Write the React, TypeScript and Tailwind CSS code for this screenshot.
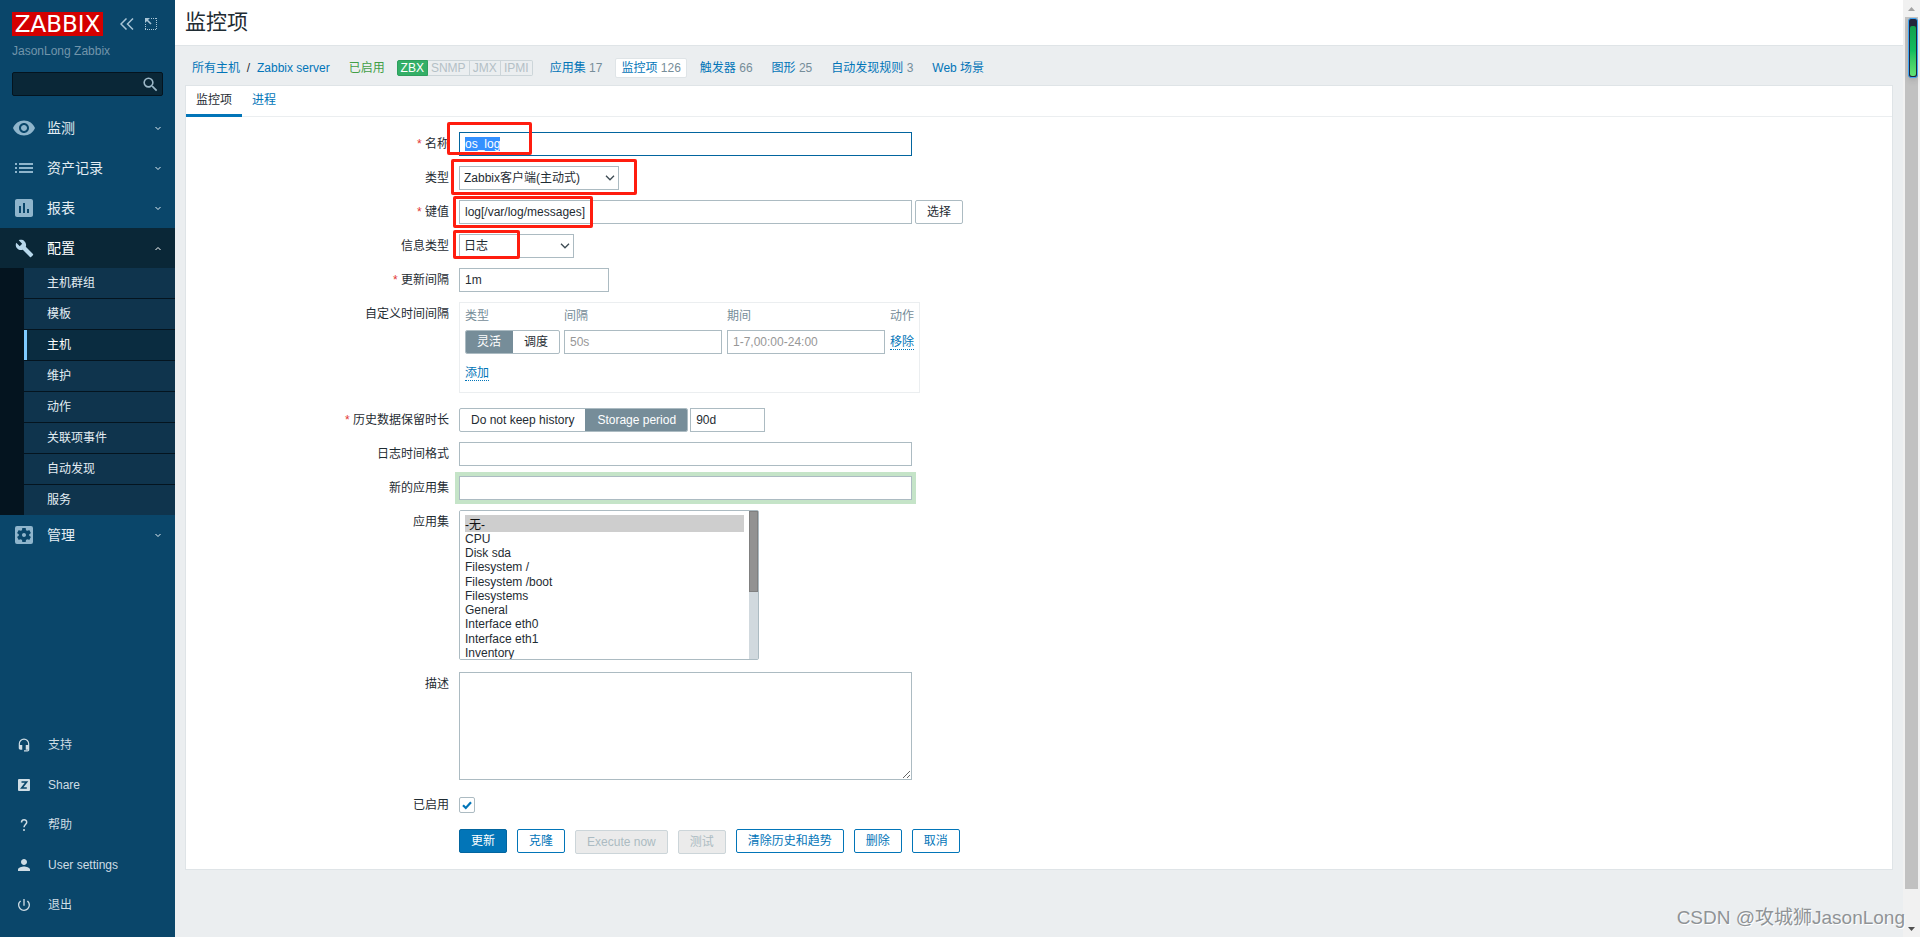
import { useEffect, useRef, type ReactNode } from 'react';
import {
  MdBuild,
  MdHeadsetMic,
  MdInsertChart,
  MdPerson,
  MdPowerSettingsNew,
  MdSearch,
  MdSettingsApplications,
  MdVisibility,
} from 'react-icons/md';

const inputClass = 'h-6 border border-[#acbbc2] bg-white px-[5px] text-[#1f2c33] outline-none placeholder:text-[#979797]';
const linkClass = 'text-[#0275b8]';

const configItems = ['主机群组', '模板', '主机', '维护', '动作', '关联项事件', '自动发现', '服务'];

const hostTabs = [
  { label: '应用集', count: 17 },
  { label: '监控项', count: 126, active: true },
  { label: '触发器', count: 66 },
  { label: '图形', count: 25 },
  { label: '自动发现规则', count: 3 },
  { label: 'Web 场景' },
];

const applications = [
  '-无-',
  'CPU',
  'Disk sda',
  'Filesystem /',
  'Filesystem /boot',
  'Filesystems',
  'General',
  'Interface eth0',
  'Interface eth1',
  'Inventory',
  'Memory',
  'Monitoring agent',
  'Network interfaces',
  'OS',
  'Processes',
  'Security',
  'Status',
  'Storage',
];

function ListIcon() {
  return (
    <svg width="18" height="12" viewBox="0 0 18 12" fill="currentColor">
      <path d="M0 1h2v2H0zM4 1h14v2H4zM0 5h2v2H0zM4 5h14v2H4zM0 9h2v2H0zM4 9h14v2H4z" />
    </svg>
  );
}

function Chevron({ up }: { up?: boolean }) {
  return (
    <svg width="6" height="5" viewBox="0 0 6 5" fill="none" stroke="currentColor" strokeWidth="1">
      <path d={up ? 'M.5 4 3 1.5 5.5 4' : 'M.5 1 3 3.500 5.5 1'} />
    </svg>
  );
}

function MenuItem({ icon, label, open }: { icon: ReactNode; label: string; open?: boolean }) {
  return (
    <a
      href="#"
      className={
        open
          ? 'flex h-10 items-center bg-[#0a2737] pr-[14px] pl-3 text-sm text-white'
          : 'flex h-10 items-center pr-[14px] pl-3 text-sm text-[#e3edf3]'
      }
    >
      <span className={open ? 'flex w-6 justify-center text-[#b8d8ec]' : 'flex w-6 justify-center text-[#8fb5cc]'}>
        {icon}
      </span>
      <span className="ml-[11px] flex-1">{label}</span>
      <Chevron up={open} />
    </a>
  );
}

function BottomItem({ icon, label }: { icon: ReactNode; label: string }) {
  return (
    <a href="#" className="flex h-10 items-center gap-3 pl-3 text-[#cfdde5]">
      <span className="flex w-6 justify-center">{icon}</span>
      {label}
    </a>
  );
}

function Sidebar() {
  return (
    <aside className="sticky top-0 flex h-screen w-[175px] shrink-0 flex-col bg-[#0a466a]">
      <div className="flex items-center px-3 pt-3">
        <a
          href="#"
          className="flex h-6 w-[91px] items-center justify-center bg-[#d40000] font-['DejaVu_Sans',sans-serif] text-[23px] leading-6 text-white"
        >
          ZABBIX
        </a>
        <button type="button" aria-label="收起" className="ml-[17px] text-[#a9c5d6]">
          <svg width="14" height="12" viewBox="0 0 14 12" fill="none" stroke="currentColor" strokeWidth="1.5">
            <path d="M6.5.5 1 6l5.500 5.500M13 .5 7.500 6l5.500 5.500" />
          </svg>
        </button>
        <button type="button" aria-label="隐藏" className="ml-[11px] text-[#a9c5d6]">
          <svg width="12" height="12" viewBox="0 0 12 12" fill="none" stroke="currentColor">
            <path d="M6 .5h6M11.500 0v12M0 11.500h12M.5 6v6" strokeDasharray="1 1" />
            <path d="M1 1l5 5" strokeWidth="1.600" />
            <path d="M0 0h5L0 5z" fill="currentColor" stroke="none" />
          </svg>
        </button>
      </div>
      <div className="px-3 pt-[7px] leading-4 text-[#7295ab]">JasonLong Zabbix</div>
      <div className="mx-3 mt-[13px] flex h-6 items-center rounded-xs border border-[#04141f] bg-[#0a2737] pr-[2px]">
        <input type="text" aria-label="搜索" className="w-full min-w-0 bg-transparent px-1 text-white outline-none" />
        <button type="button" aria-label="搜索" className="shrink-0 text-[#9cb8c8]">
          <MdSearch size={19} />
        </button>
      </div>

      <nav className="mt-3">
        <MenuItem icon={<MdVisibility size={24} />} label="监测" />
        <MenuItem icon={<ListIcon />} label="资产记录" />
        <MenuItem icon={<MdInsertChart size={24} />} label="报表" />
        <MenuItem icon={<MdBuild size={19} />} label="配置" open />
        <ul className="flex flex-col gap-px bg-[#04141f] pl-6">
          {configItems.map((item) => (
            <li key={item}>
              <a
                href="#"
                className={
                  item === '主机'
                    ? 'flex h-[30px] items-center border-l-[3px] border-[#7fcbff] bg-[#0a2c40] pl-5 text-white'
                    : 'flex h-[30px] items-center bg-[#0f344d] pl-[23px] text-[#e3edf3]'
                }
              >
                {item}
              </a>
            </li>
          ))}
        </ul>
        <MenuItem icon={<MdSettingsApplications size={24} />} label="管理" />
      </nav>

      <nav className="mt-auto pb-3">
        <BottomItem icon={<MdHeadsetMic size={14} />} label="支持" />
        <BottomItem
          icon={
            <svg width="12" height="12" viewBox="0 0 12 12">
              <rect width="12" height="12" rx="1" fill="currentColor" />
              <path d="M3.500 3h5L3.800 9h5" fill="none" stroke="#0a466a" strokeWidth="1.700" />
            </svg>
          }
          label="Share"
        />
        <BottomItem
          icon={
            <svg width="12" height="12" viewBox="0 0 12 12" fill="none" stroke="currentColor" strokeWidth="1.500">
              <path d="M3.500 3.500C3.500-.2 8.700 0 8.700 3.200 8.700 5.500 6 5.600 6 8.300M6 10v2" />
            </svg>
          }
          label="帮助"
        />
        <BottomItem icon={<MdPerson size={18} />} label="User settings" />
        <BottomItem icon={<MdPowerSettingsNew size={16} />} label="退出" />
      </nav>
    </aside>
  );
}

function HostNav() {
  return (
    <nav className="flex h-[39px] items-center pt-1 pl-[17px]">
      <a href="#" className={linkClass}>所有主机</a>
      <span className="w-[17px] text-center">/</span>
      <a href="#" className={linkClass}>Zabbix server</a>
      <span className="ml-[19px] text-[#429e47]">已启用</span>
      <div className="ml-3 flex h-4 items-center text-center leading-[14px]">
        <span className="w-[31px] rounded-l-xs border border-[#2f9f5e] bg-[#34af67] text-white">ZBX</span>
        <span className="w-[42px] border border-l-0 border-[#ccd5d9] text-[#b4c0c6]">SNMP</span>
        <span className="w-[31px] border border-l-0 border-[#ccd5d9] text-[#b4c0c6]">JMX</span>
        <span className="w-8 rounded-r-xs border border-l-0 border-[#ccd5d9] text-[#b4c0c6]">IPMI</span>
      </div>
      <div className="ml-[11px] flex gap-[7px]">
        {hostTabs.map((tab) => (
          <a
            key={tab.label}
            href="#"
            className={
              tab.active
                ? 'rounded-xs border border-[#dfe4e7] bg-white px-[5px] leading-[18px] text-[#0275b8]'
                : 'border border-transparent px-[5px] leading-[18px] text-[#0275b8]'
            }
          >
            {tab.label}
            {tab.count && <span className="text-[#768d99]"> {tab.count}</span>}
          </a>
        ))}
      </div>
    </nav>
  );
}

type RowProps = {
  label?: string;
  htmlFor?: string;
  required?: boolean;
  children: ReactNode;
};

function Row({ label, htmlFor, required, children }: RowProps) {
  return (
    <div className="flex gap-[10px]">
      <label htmlFor={htmlFor} className="w-[263px] shrink-0 text-right leading-6">
        {required && <span className="text-[#e33734]">* </span>}
        {label}
      </label>
      <div className="relative flex">{children}</div>
    </div>
  );
}

// red frame drawn over a field
function Mark({ className }: { className: string }) {
  return <span className={`pointer-events-none absolute rounded-xs border-3 border-[#ff1d0f] ${className}`} />;
}

function Select({ id, option, className }: { id: string; option: string; className: string }) {
  return (
    <div className="relative">
      <select
        id={id}
        className={`block h-6 appearance-none border border-[#acbbc2] bg-white pr-5 pl-1 text-[#1f2c33] outline-none ${className}`}
      >
        <option>{option}</option>
      </select>
      <svg
        width="10"
        height="6"
        viewBox="0 0 10 6"
        fill="none"
        stroke="#3c4a52"
        strokeWidth="1.300"
        className="pointer-events-none absolute top-[9px] right-1"
      >
        <path d="M1 .8 5 4.800 9 .8" />
      </svg>
    </div>
  );
}

function Segmented({ name, options, selected }: { name: string; options: string[]; selected: number }) {
  return (
    <div className="flex h-6 overflow-hidden rounded-xs border border-[#acbbc2]">
      {options.map((option, i) => (
        <label
          key={option}
          className="flex items-center border-[#768d99] px-[11px] leading-[22px] not-first:border-l has-checked:bg-[#768d99] has-checked:text-white"
        >
          <input type="radio" name={name} defaultChecked={i === selected} className="sr-only" />
          {option}
        </label>
      ))}
    </div>
  );
}

function IntervalTable() {
  return (
    <div className="h-[91px] border border-[#ebeef0] px-[5px] pt-[2px]">
      <table className="border-collapse text-left">
        <thead>
          <tr className="h-[22px] text-[#768d99]">
            <th className="w-[99px] font-normal">类型</th>
            <th className="w-[163px] font-normal">间隔</th>
            <th className="w-[163px] font-normal">期间</th>
            <th className="font-normal">动作</th>
          </tr>
        </thead>
        <tbody>
          <tr className="h-[30px]">
            <td className="pr-1">
              <Segmented name="interval-type" options={['灵活', '调度']} selected={0} />
            </td>
            <td className="pr-[5px]">
              <input type="text" aria-label="间隔" placeholder="50s" className={`${inputClass} w-full`} />
            </td>
            <td className="pr-[5px]">
              <input type="text" aria-label="期间" placeholder="1-7,00:00-24:00" className={`${inputClass} w-full`} />
            </td>
            <td>
              <button type="button" className="border-b border-dotted border-[#0275b8] leading-[14px] text-[#0275b8]">
                移除
              </button>
            </td>
          </tr>
          <tr className="h-8">
            <td colSpan={4}>
              <button type="button" className="border-b border-dotted border-[#0275b8] leading-[14px] text-[#0275b8]">
                添加
              </button>
            </td>
          </tr>
        </tbody>
      </table>
    </div>
  );
}

function ItemForm() {
  const nameRef = useRef<HTMLInputElement>(null);

  useEffect(() => {
    nameRef.current?.focus();
    nameRef.current?.select();
  }, []);

  const action = 'h-6 rounded-xs border border-[#0275b8] bg-white px-[11px] text-[#0275b8]';
  const disabled = 'mt-px h-6 rounded-xs border border-[#ccd5d9] bg-[#ebebeb] px-[11px] text-[#acbbc2]';

  return (
    <form className="flex flex-col gap-[10px] pt-[15px] pb-[15px]">
      <Row label="名称" htmlFor="name" required>
        <input
          ref={nameRef}
          id="name"
          type="text"
          defaultValue="os_log"
          className={`${inputClass} w-[453px] selection:bg-[#3390ff] selection:text-white focus:border-[#02659f]`}
        />
        <Mark className="-top-[10px] -left-3 h-[33px] w-[85px]" />
      </Row>
      <Row label="类型" htmlFor="type">
        <Select id="type" option="Zabbix客户端(主动式)" className="w-[160px]" />
        <Mark className="-top-[7px] -left-2 h-9 w-[186px]" />
      </Row>
      <Row label="键值" htmlFor="key" required>
        <input id="key" type="text" defaultValue="log[/var/log/messages]" className={`${inputClass} w-[453px]`} />
        <button type="button" className="ml-[3px] h-6 rounded-xs border border-[#acbbc2] px-[11px]">
          选择
        </button>
        <Mark className="-top-1 -left-[6px] h-8 w-[140px]" />
      </Row>
      <Row label="信息类型" htmlFor="value-type">
        <Select id="value-type" option="日志" className="w-[115px]" />
        <Mark className="-top-1 -left-[6px] h-[29px] w-[67px]" />
      </Row>
      <Row label="更新间隔" htmlFor="delay" required>
        <input id="delay" type="text" defaultValue="1m" className={`${inputClass} w-[150px]`} />
      </Row>
      <Row label="自定义时间间隔">
        <IntervalTable />
      </Row>
      <div className="pt-[5px]">
        <Row label="历史数据保留时长" htmlFor="history" required>
          <Segmented name="history-mode" options={['Do not keep history', 'Storage period']} selected={1} />
          <input id="history" type="text" defaultValue="90d" className={`${inputClass} ml-[2px] w-[75px]`} />
        </Row>
      </div>
      <Row label="日志时间格式" htmlFor="logtime">
        <input id="logtime" type="text" className={`${inputClass} w-[453px]`} />
      </Row>
      <Row label="新的应用集" htmlFor="new-app">
        <input id="new-app" type="text" className={`${inputClass} w-[453px] ring-4 ring-[#c5e4c8]`} />
      </Row>
      <Row label="应用集" htmlFor="apps">
        <select
          id="apps"
          multiple
          size={10}
          defaultValue={['-无-']}
          className="h-[150px] w-[300px] rounded-xs border border-[#acbbc2] bg-white py-1 pr-[14px] pl-[5px] text-[#1f2c33] [scrollbar-width:none]"
        >
          {applications.map((app) => (
            <option key={app} className="min-h-0 p-0 leading-[14px] nth-[4n]:pb-px">
              {app}
            </option>
          ))}
        </select>
        <div className="pointer-events-none absolute inset-y-px right-px w-[9px] bg-[#d1d9de]">
          <div className="h-[81px] border border-[#808080] bg-[#929292]" />
        </div>
      </Row>
      <div className="pt-[2px]">
        <Row label="描述" htmlFor="description">
          <textarea
            id="description"
            className="block h-[108px] w-[453px] resize border border-[#acbbc2] bg-white p-1 outline-none"
          />
        </Row>
      </div>
      <div className="h-[29px] pt-[3px]">
        <Row label="已启用" htmlFor="enabled">
          <span className="mt-1 grid size-4 place-items-center">
            <input
              id="enabled"
              type="checkbox"
              defaultChecked
              className="size-4 appearance-none rounded-xs border border-[#acbbc2] bg-white [grid-area:1/1]"
            />
            <svg
              width="10"
              height="9"
              viewBox="0 0 10 9"
              fill="none"
              stroke="#0275b8"
              strokeWidth="2.2"
              className="pointer-events-none [grid-area:1/1]"
            >
              <path d="M1 4.200 3.800 7 9 1.300" />
            </svg>
          </span>
        </Row>
      </div>
      <div className="flex items-start gap-[10px] pl-[273px]">
        <button type="button" className="h-6 rounded-xs border border-[#02659f] bg-[#0275b8] px-[11px] text-white">
          更新
        </button>
        <button type="button" className={action}>克隆</button>
        <button type="button" disabled className={disabled}>Execute now</button>
        <button type="button" disabled className={disabled}>测试</button>
        <button type="button" className={action}>清除历史和趋势</button>
        <button type="button" className={action}>删除</button>
        <button type="button" className={action}>取消</button>
      </div>
    </form>
  );
}

function ScrollRail() {
  return (
    <div className="sticky top-0 flex h-screen w-[17px] shrink-0 flex-col items-center bg-[#f1f1f1]">
      <svg width="17" height="17" viewBox="0 0 17 17" fill="#a3a3a3" className="shrink-0">
        <path d="M5 11h7L8.500 7z" />
      </svg>
      <div className="mb-[31px] w-[13px] flex-1 bg-[#c1c1c1]" />
      <svg width="17" height="17" viewBox="0 0 17 17" fill="#505050" className="shrink-0">
        <path d="M5 7h7l-3.500 4z" />
      </svg>
      <div className="absolute top-[18px] right-[2px] h-[60px] w-[10px] rounded-[3px] border border-[#3ea6f5] bg-[#23253a] p-px pt-[7px] shadow-md">
        <div className="h-full rounded-xs bg-linear-to-b from-[#12a04c] via-[#12bd5d] to-[#62e372]" />
      </div>
    </div>
  );
}

export default function App() {
  return (
    <div className="relative flex min-h-screen bg-[#ebeef0] font-['Liberation_Sans','Noto_Sans_CJK_SC',sans-serif] text-xs text-[#1f2c33]">
      <Sidebar />
      <div className="min-w-0 flex-1">
        <header className="flex h-[46px] items-center border-b border-[#dfe4e7] bg-white px-[10px] pb-px">
          <h1 className="text-[21px] leading-8">监控项</h1>
        </header>
        <HostNav />
        <main className="mx-[10px] border border-[#dfe4e7] bg-white">
          <div role="tablist" className="flex h-[31px] border-b border-[#ebeef0]">
            <button
              type="button"
              role="tab"
              aria-selected="true"
              className="h-[31px] border-b-3 border-[#0275b8] px-[10px]"
            >
              监控项
            </button>
            <button
              type="button"
              role="tab"
              aria-selected="false"
              className="h-[31px] border-b-3 border-transparent px-[10px] text-[#0275b8]"
            >
              进程
            </button>
          </div>
          <ItemForm />
        </main>
      </div>
      <ScrollRail />
      <div className="pointer-events-none absolute right-[15px] bottom-[3px] text-[19px] leading-8 text-[#8f9396] [text-shadow:1px_1px_0_#fff]">
        CSDN @攻城狮JasonLong
      </div>
    </div>
  );
}
